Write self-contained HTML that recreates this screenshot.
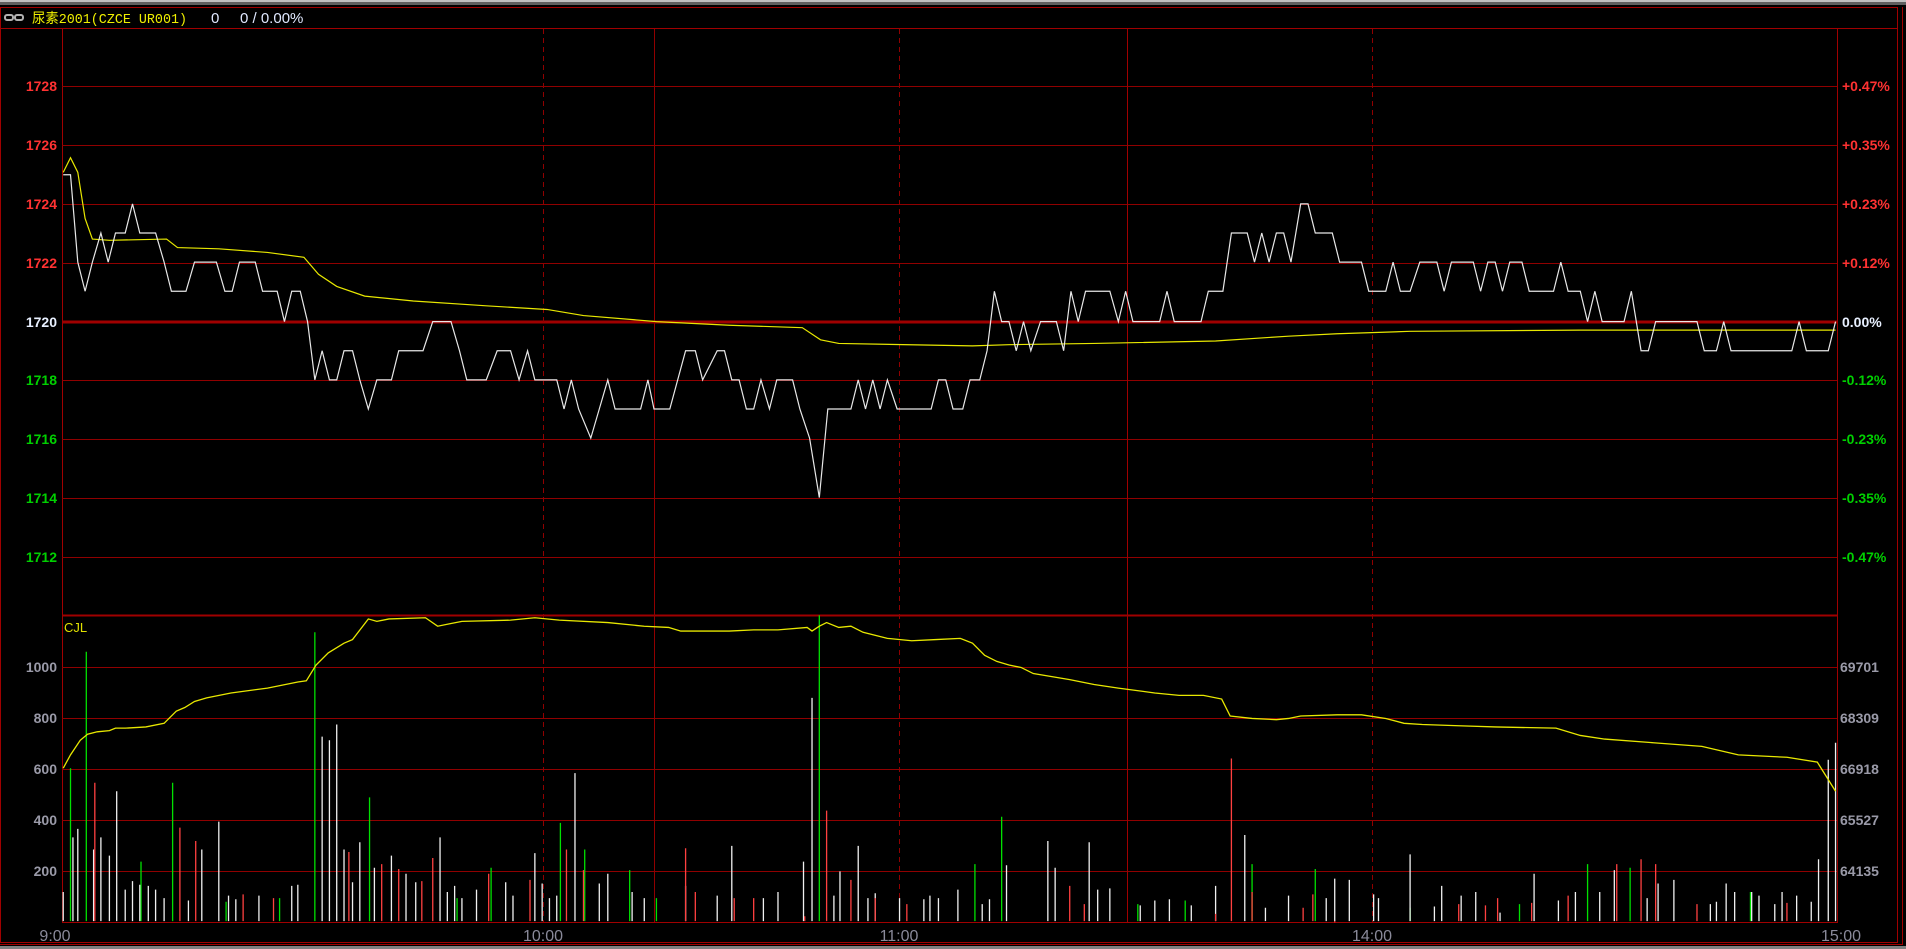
<!DOCTYPE html>
<html><head><meta charset="utf-8"><style>
html,body{margin:0;padding:0;background:#000;width:1906px;height:949px;overflow:hidden}
svg{display:block}
text{font-family:"Liberation Sans",Arial,sans-serif}
text.mono{font-family:"Liberation Mono","Noto Sans CJK SC",monospace}
</style></head><body>
<svg width="1906" height="949" viewBox="0 0 1906 949" xmlns="http://www.w3.org/2000/svg">
<rect x="0" y="0" width="1906" height="949" fill="#000"/>
<rect x="0" y="0" width="1906" height="2" fill="#c0c0c0"/>
<rect x="0" y="2" width="1906" height="3" fill="#606060"/>
<rect x="0.5" y="7.5" width="1897" height="935" fill="none" stroke="#a00000" stroke-width="1"/>
<line x1="1902.5" y1="7" x2="1902.5" y2="945" stroke="#a00000"/>
<line x1="0" y1="944.5" x2="1903" y2="944.5" stroke="#a00000"/>
<rect x="0" y="946" width="1906" height="3" fill="#808080"/>
<line x1="0" y1="28.5" x2="1898" y2="28.5" stroke="#a00000"/>
<g fill="none" stroke="#b0b0b0" stroke-width="2"><rect x="5" y="15" width="8" height="5" rx="2"/><rect x="15" y="15" width="8" height="5" rx="2"/></g>
<text class="mono" x="32" y="23" font-size="14" fill="#f0f000" textLength="155" lengthAdjust="spacingAndGlyphs">尿素2001(CZCE UR001)</text>
<text x="211" y="23" font-size="15" fill="#e0e8ff">0</text>
<text x="240" y="23" font-size="15" fill="#e0e8ff">0 / 0.00%</text>
<line x1="62.5" y1="28" x2="62.5" y2="923" stroke="#a00000"/>
<line x1="1837.5" y1="28" x2="1837.5" y2="923" stroke="#a00000"/>
<g stroke="#900000" stroke-width="1">
<line x1="62" y1="86.5" x2="1837" y2="86.5"/><line x1="62" y1="145.5" x2="1837" y2="145.5"/>
<line x1="62" y1="204.5" x2="1837" y2="204.5"/><line x1="62" y1="263.5" x2="1837" y2="263.5"/>
<line x1="62" y1="380.5" x2="1837" y2="380.5"/><line x1="62" y1="439.5" x2="1837" y2="439.5"/>
<line x1="62" y1="498.5" x2="1837" y2="498.5"/><line x1="62" y1="557.5" x2="1837" y2="557.5"/>
<line x1="62" y1="667.5" x2="1837" y2="667.5"/><line x1="62" y1="718.5" x2="1837" y2="718.5"/>
<line x1="62" y1="769.5" x2="1837" y2="769.5"/><line x1="62" y1="820.5" x2="1837" y2="820.5"/>
<line x1="62" y1="871.5" x2="1837" y2="871.5"/>
</g>
<line x1="62" y1="322" x2="1837" y2="322" stroke="#a00000" stroke-width="3"/>
<line x1="62" y1="615.5" x2="1837" y2="615.5" stroke="#a00000" stroke-width="2"/>
<line x1="62" y1="922.5" x2="1837" y2="922.5" stroke="#a00000"/>
<g stroke="#900000">
<line x1="543.5" y1="29" x2="543.5" y2="922" stroke-dasharray="5,4"/>
<line x1="899.5" y1="29" x2="899.5" y2="922" stroke-dasharray="5,4"/>
<line x1="1372.5" y1="29" x2="1372.5" y2="922" stroke-dasharray="5,4"/>
<line x1="654.5" y1="29" x2="654.5" y2="922"/>
<line x1="1127.5" y1="29" x2="1127.5" y2="922" stroke="#a00000"/>
</g>
<g font-size="14" font-weight="bold" text-anchor="end">
<text x="57" y="91" fill="#ff3232">1728</text><text x="57" y="150" fill="#ff3232">1726</text>
<text x="57" y="209" fill="#ff3232">1724</text><text x="57" y="268" fill="#ff3232">1722</text>
<text x="57" y="327" fill="#e8f0ff">1720</text><text x="57" y="385" fill="#00d000">1718</text>
<text x="57" y="444" fill="#00d000">1716</text><text x="57" y="503" fill="#00d000">1714</text>
<text x="57" y="562" fill="#00d000">1712</text>
<g fill="#9a9aa8"><text x="57" y="672">1000</text><text x="57" y="723">800</text><text x="57" y="774">600</text><text x="57" y="825">400</text><text x="57" y="876">200</text></g>
</g>
<g font-size="14" font-weight="bold">
<text x="1842" y="91" fill="#ff3232">+0.47%</text><text x="1842" y="150" fill="#ff3232">+0.35%</text>
<text x="1842" y="209" fill="#ff3232">+0.23%</text><text x="1842" y="268" fill="#ff3232">+0.12%</text>
<text x="1842" y="327" fill="#e8f0ff">0.00%</text><text x="1842" y="385" fill="#00d000">-0.12%</text>
<text x="1842" y="444" fill="#00d000">-0.23%</text><text x="1842" y="503" fill="#00d000">-0.35%</text>
<text x="1842" y="562" fill="#00d000">-0.47%</text>
<g fill="#9a9aa8"><text x="1840" y="672">69701</text><text x="1840" y="723">68309</text><text x="1840" y="774">66918</text><text x="1840" y="825">65527</text><text x="1840" y="876">64135</text></g>
</g>
<text x="64" y="632" font-size="13" fill="#e0e000">CJL</text>
<g font-size="16" fill="#8a8a9a" text-anchor="middle">
<text x="55" y="941">9:00</text><text x="543" y="941">10:00</text><text x="899" y="941">11:00</text><text x="1372" y="941">14:00</text><text x="1841" y="941">15:00</text>
</g>
<g transform="scale(1.2156,1.2136)">
<path vector-effect="non-scaling-stroke" stroke-width="1.3" fill="none" stroke="#00e000" d="M58 759V633M71 759V537M116 759V710M142 759V645M259 759V521M304 759V657M376 759V740M404 759V715M461 759V678M481 759V700M518 759V717M674 759V507M802 759V712M824 759V673M1030 759V712M1082 759V716M1306 759V712M1341 759V715M1440 759V735M230 759V740M186 759V743M540 759V740M936 759V745M975 759V742M1160 759V748M1250 759V745"/>
<path vector-effect="non-scaling-stroke" stroke-width="1.3" fill="none" stroke="#f0f0f0" d="M52 759V735M60 759V690M64 759V683M77 759V700M83 759V690M90 759V705M96 759V652M103 759V733M109 759V726M115 759V729M122 759V730M128 759V733M135 759V740M155 759V742M166 759V700M180 759V677M188 759V738M194 759V741M213 759V738M240 759V730M245 759V729M265 759V607M271 759V610M277 759V597M283 759V700M290 759V727M296 759V694M308 759V715M322 759V705M334 759V720M342 759V727M362 759V690M368 759V735M374 759V730M380 759V740M392 759V733M416 759V727M422 759V738M440 759V703M446 759V728M452 759V740M458 759V738M473 759V637M493 759V728M500 759V720M520 759V735M530 759V740M564 759V730M590 759V738M602 759V697M628 759V740M640 759V735M661 759V710M668 759V575M686 759V738M691 759V718M706 759V697M714 759V740M720 759V736M740 759V740M760 759V741M765 759V738M772 759V740M788 759V733M808 759V745M814 759V741M828 759V713M862 759V693M868 759V715M896 759V694M903 759V733M913 759V732M938 759V746M950 759V742M962 759V741M980 759V746M1000 759V730M1024 759V688M1041 759V748M1060 759V738M1091 759V740M1098 759V724M1110 759V725M1130 759V737M1134 759V740M1160 759V704M1180 759V747M1186 759V730M1202 759V738M1214 759V735M1234 759V752M1262 759V720M1282 759V742M1296 759V735M1316 759V735M1328 759V717M1355 759V740M1364 759V728M1377 759V725M1407 759V745M1412 759V743M1420 759V728M1427 759V735M1441 759V735M1447 759V738M1460 759V745M1466 759V735M1478 759V738M1490 759V743M1496 759V708M1504 759V626M1510 759V612"/>
<path vector-effect="non-scaling-stroke" stroke-width="1.3" fill="none" stroke="#ff4040" d="M78 759V645M148 759V682M161 759V693M200 759V737M225 759V740M287 759V702M314 759V712M328 759V716M347 759V726M356 759V707M402 759V720M436 759V725M466 759V700M480 759V717M564 759V699M572 759V735M604 759V740M620 759V740M662 759V755M680 759V668M700 759V725M720 759V740M746 759V745M880 759V730M892 759V745M1000 759V753M1013 759V625M1030 759V735M1072 759V748M1080 759V737M1098 759V760M1200 759V745M1222 759V746M1232 759V740M1260 759V744M1290 759V738M1330 759V712M1350 759V708M1362 759V712M1396 759V745M1470 759V744"/>
<polyline vector-effect="non-scaling-stroke" stroke-width="1.3" fill="none" stroke="#e8e800" points="52,633 58,622 66,610 72,605 80,603 90,602 95,600 103,600 120,599 135,596 145,586 152,583 160,578 170,575 190,571 220,567 245,562 252,561 260,548 270,538 283,530 290,527 303,510 310,512 320,510 350,509 360,516 370,514 380,512 420,511 440,509 460,511 500,513 530,516 550,517 560,520 600,520 620,519 640,519 664,517 668,520 674,516 680,513 690,517 700,516 710,521 730,526 750,528 770,527 790,526 800,530 810,540 820,545 830,548 840,550 850,555 880,560 900,564 920,567 950,571 970,573 990,573 1005,576 1012,590 1030,592 1050,593 1060,592 1070,590 1100,589 1120,589 1140,592 1155,596 1170,597 1200,598 1230,599 1280,600 1300,606 1320,609 1360,612 1400,615 1430,622 1470,624 1495,628 1510,652"/>
<polyline vector-effect="non-scaling-stroke" stroke-width="1.2" fill="none" stroke="#e8e800" points="52,142 58,130 64,142 70,180 76,197 90,198 137,197 146,204 180,205 220,208 250,212 262,226 277,236 300,244 340,248 400,252 450,255 480,260 540,265 600,268 660,270 675,280 690,283 800,285 830,284 900,283 1000,281 1060,277 1100,275 1160,273 1300,272 1510,272"/>
<polyline vector-effect="non-scaling-stroke" stroke-width="1.2" fill="none" stroke="#e8e8e8" points="52,144 58,144 64,216 70,240 76,216 83,192 89,216 95,192 103,192 109,168 115,192 128,192 135,216 141,240 153,240 160,216 178,216 185,240 191,240 197,216 210,216 216,240 228,240 234,265 240,240 247,240 253,265 259,313 265,289 271,313 277,313 283,289 290,289 296,313 303,337 310,313 322,313 328,289 348,289 356,265 371,265 378,289 384,313 400,313 409,289 420,289 427,313 434,289 440,313 458,313 464,337 470,313 476,337 486,361 493,337 500,313 506,337 527,337 533,313 538,337 551,337 564,289 572,289 578,313 590,289 596,289 602,313 608,313 614,337 620,337 626,313 633,337 639,313 652,313 658,337 666,361 674,410 681,337 700,337 706,313 712,337 718,313 724,337 730,313 738,337 766,337 772,313 778,313 784,337 792,337 798,313 806,313 812,289 818,240 824,265 830,265 836,289 842,265 848,289 856,265 869,265 875,289 881,240 887,265 893,240 913,240 920,265 926,240 932,265 954,265 960,240 966,265 988,265 994,240 1006,240 1013,192 1026,192 1032,216 1038,192 1044,216 1050,192 1056,192 1062,216 1070,168 1076,168 1082,192 1096,192 1102,216 1120,216 1126,240 1140,240 1146,216 1152,240 1160,240 1168,216 1182,216 1188,240 1194,216 1212,216 1218,240 1224,216 1230,216 1236,240 1242,216 1252,216 1258,240 1278,240 1284,216 1290,240 1300,240 1306,265 1312,240 1318,265 1336,265 1342,240 1350,289 1356,289 1362,265 1396,265 1402,289 1412,289 1418,265 1424,289 1474,289 1480,265 1486,289 1504,289 1510,265"/>
</g>
</svg>
</body></html>
